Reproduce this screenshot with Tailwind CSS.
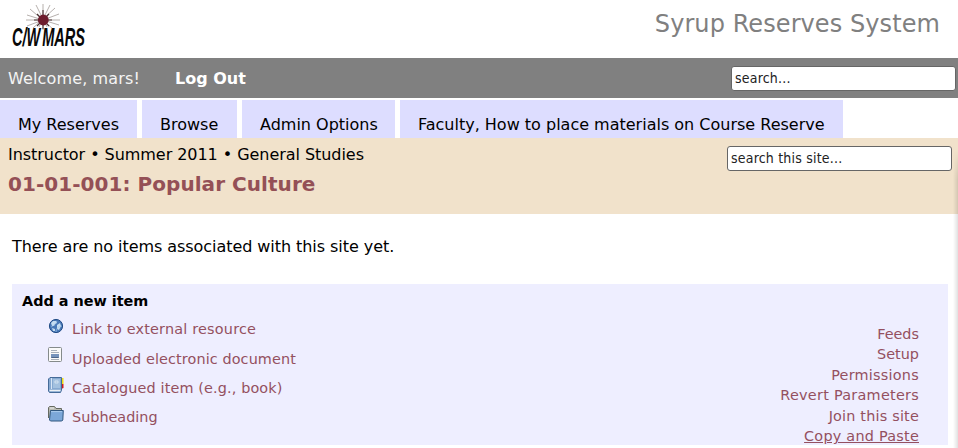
<!DOCTYPE html>
<html lang="en">
<head>
<meta charset="utf-8">
<title>Syrup Reserves System</title>
<script src="https://cdn.jsdelivr.net/npm/@tailwindcss/browser@4"></script>
</head>
<body class="relative h-[448px] overflow-hidden bg-white font-['DejaVu_Sans',sans-serif] text-base leading-[20px] text-black">
<header class="flex h-[58px] items-start justify-between pl-2 pr-[18px]">
  <svg class="mt-[2px] h-[54px] w-[92px] overflow-visible" viewBox="8 2 92 54" role="img" aria-label="C/W MARS">
    <path d="M26 20H60M43 4V30M30 9L53 29M55 8L33 28M36 5L47 27M50 5L39 27M27 15L59 25M59 14L27 26" stroke="#a39c98" stroke-width=".8" fill="none"/>
    <path d="M43 10v19M34 20h18M37 14l12 12M49 14L37 26" stroke="#4a3335" stroke-width="1.1"/>
    <circle cx="43.3" cy="20" r="5.4" fill="#6d1c2d"/>
    <text x="12" y="45.5" textLength="73" lengthAdjust="spacingAndGlyphs" word-spacing="-4" font-family="Liberation Sans Narrow, Liberation Sans, sans-serif" font-weight="bold" font-style="italic" font-size="26.5" fill="#080808">C/W MARS</text>
  </svg>
  <h1 class="mt-[9px] text-[24px] leading-[30px] tracking-[0.08px] text-[#808080]">Syrup Reserves System</h1>
</header>
<div class="flex h-10 items-center justify-between bg-[#808080] pl-2 pr-[2px] text-white">
  <div class="mt-[2px] flex gap-[35px]"><span class="tracking-[0.14px] text-[#f4f4f4]">Welcome, mars!</span><a class="font-bold">Log Out</a></div>
  <input aria-label="Search" value="search..." class="h-[25px] w-[225px] rounded-[3px] border border-[#666] bg-white px-[3px] font-['DejaVu_Sans_Condensed','DejaVu_Sans',sans-serif] text-[14px] tracking-[0.2px] text-[#222]">
</div>
<nav class="mt-[2px] flex h-[38px] gap-[5px] leading-[49px]">
  <a class="w-[137px] bg-[#ddddff] pl-[18px]">My Reserves</a>
  <a class="w-[95px] bg-[#ddddff] pl-[18px]">Browse</a>
  <a class="w-[153px] bg-[#ddddff] pl-[18px]">Admin Options</a>
  <a class="w-[443px] bg-[#ddddff] pl-[18px]">Faculty, How to place materials on Course Reserve</a>
</nav>
<section class="flex h-[76px] items-start justify-between bg-[#f1e2cb] pl-2 pr-[6px] pt-[7px]">
  <div>
    <p class="tracking-[-0.05px]">Instructor • Summer 2011 • General Studies</p>
    <h2 class="mt-[7px] text-[20px] font-bold leading-6 tracking-[0.05px] text-[#945056]">01-01-001: Popular Culture</h2>
  </div>
  <input aria-label="Search this site" value="search this site..." class="mt-px h-[25px] w-[225px] rounded-[3px] border border-[#666] bg-white px-[3px] pb-[2px] font-['DejaVu_Sans_Condensed','DejaVu_Sans',sans-serif] text-[14px] tracking-[0.2px] text-[#222]">
</section>
<main class="px-3 pr-[10px] pt-[23px]">
  <p class="tracking-[-0.06px]">There are no items associated with this site yet.</p>
  <section class="mt-[27px] flex h-[161px] justify-between bg-[#eeeeff] pl-[10px] pr-[29px] text-[14.4px] text-[#945060]">
    <div class="pt-[7px]">
      <h3 class="font-bold text-black">Add a new item</h3>
      <ul class="mt-[3px] pl-[26px]">
        <li class="flex h-[29.4px] items-center gap-2">
          <svg class="-mt-[5px] size-4" viewBox="0 0 16 16"><circle cx="8" cy="8" r="6.6" fill="#4878b7" stroke="#234d87"/><path d="M3 5l2-2 3 0 1 2-2 1-1 2-2 0zM9 7l3-2 1 3-2 4-2-1zM4 10l3 1 0 2-2 0z" fill="#c5ddf1"/><path d="M3 9Q8 7 9 3M8 14Q8 9 14 8" fill="none" stroke="#a7c9e9" stroke-width=".6"/></svg>
          <a class="tracking-[0.2px]">Link to external resource</a></li>
        <li class="flex h-[29.4px] items-center gap-2">
          <svg class="-mt-[6px] size-4" viewBox="0 0 16 16"><rect x=".5" y=".5" width="13" height="14" rx="1" fill="#fafafa" stroke="#858b8b"/><path d="M3 3.5h6M3 5.5h8M3 12.5h8" stroke="#a8b0bb"/><rect x="3" y="7" width="8" height="4" fill="#7794bc"/><path d="M3.5 10.5h7" stroke="#4c6588"/></svg>
          <a class="mt-px tracking-[0.11px]">Uploaded electronic document</a></li>
        <li class="flex h-[29.4px] items-center gap-2">
          <svg class="-mt-[5px] size-4" viewBox="0 0 16 16"><path d="M13 1h2.5v6H13z" fill="#f0df12"/><path d="M13 7h2.5v4l-2.5 1z" fill="#ce1d20"/><path d="M2 .5h11.5v12.5l-1 2.5H1.5l-1-1.5V2z" fill="#86a9d1" stroke="#456b99"/><path d="M3.5 1v11" stroke="#d7e6f6"/><path d="M5 2h7v9H5z" fill="#a3c1df"/><path d="M7 4h3v2H7z" fill="none" stroke="#dbe8f4" stroke-width=".8"/><path d="M1.5 13.5h11" stroke="#edf1f4" stroke-width="1.4"/></svg>
          <a class="mt-px tracking-[0.14px]">Catalogued item (e.g., book)</a></li>
        <li class="flex h-[29.4px] items-center gap-2">
          <svg class="-mt-[5px] size-4" viewBox="0 0 16 16"><path d="M.5 12V1.5l1-1h5l1.5 2h5.5V5" fill="#b9bab1" stroke="#656960"/><path d="M2 2h4" stroke="#eee"/><path d="M2.5 4.5h12.8l-.5 9.5-1 1H2.5l-1-1z" fill="#7ca7d8" stroke="#31577f"/><path d="M3 5.6h11" stroke="#abcaec"/></svg>
          <a>Subheading</a></li>
      </ul>
    </div>
    <ul class="pt-[40px] text-right leading-[20.4px]">
      <li>Feeds</li><li>Setup</li><li class="tracking-[0.25px]">Permissions</li><li class="tracking-[0.27px]">Revert Parameters</li><li class="tracking-[0.2px]">Join this site</li><li class="tracking-[0.24px] underline">Copy and Paste</li>
    </ul>
  </section>
</main>
<div class="absolute right-0 top-[150px] h-[298px] w-[5px] bg-linear-to-r from-black/0 to-black/12 mask-t-from-90% mask-t-to-100%"></div>
</body>
</html>
